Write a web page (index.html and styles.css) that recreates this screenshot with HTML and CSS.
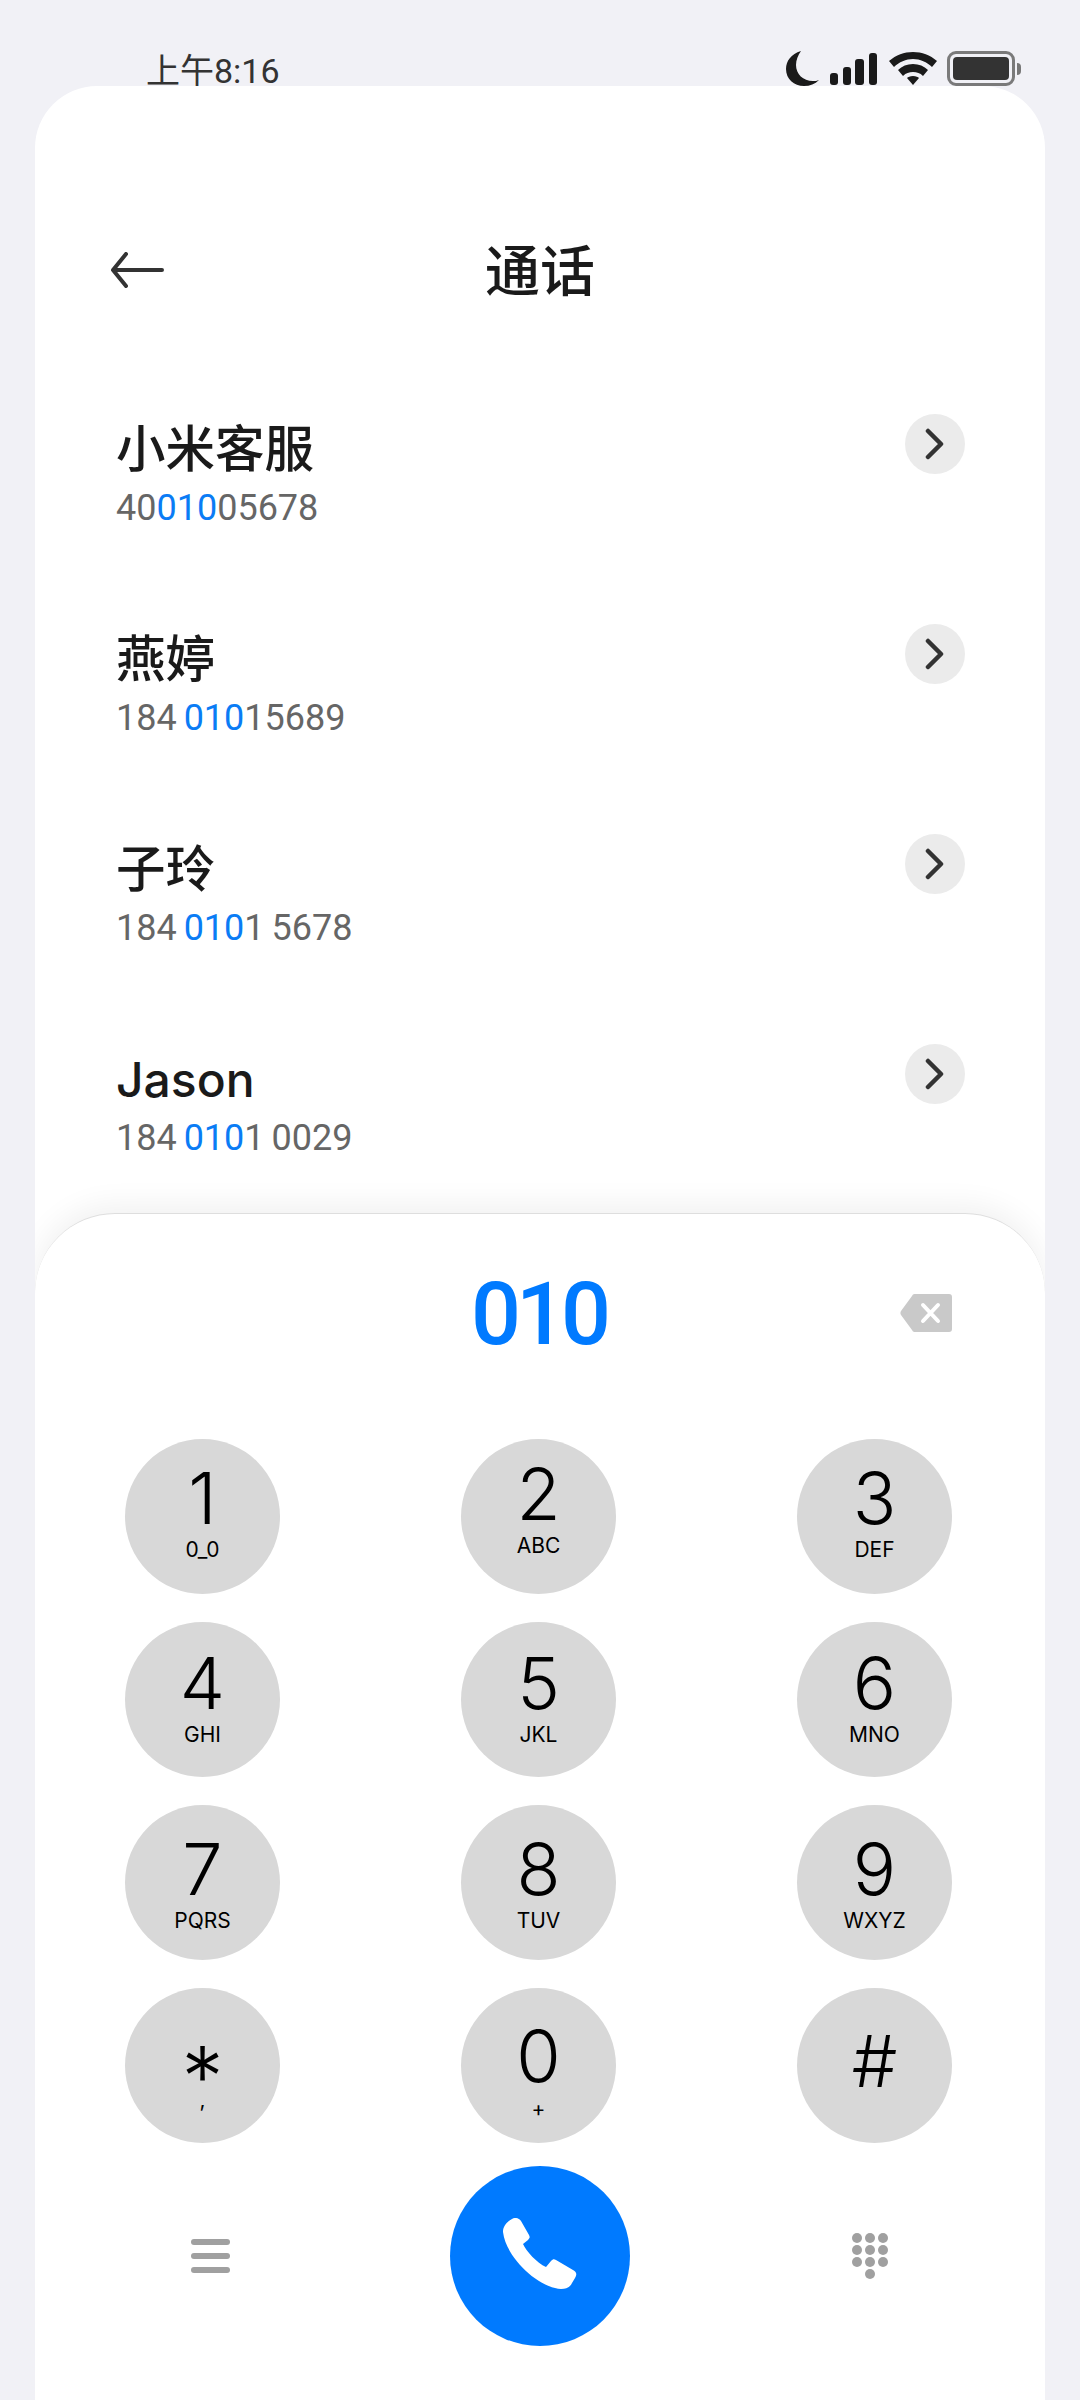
FILE: index.html
```html
<!DOCTYPE html>
<html>
<head>
  <meta charset="utf-8">
  <title>通话</title>
  <link rel="stylesheet" href="styles.css">
</head>
<body>
  <!-- Status bar, the card covers the bottom of it -->
  <div class="status-bar">
    <span class="status-time">上午8:16</span>
    <div class="status-icons">
      <svg class="icon-moon" width="33" height="35" viewBox="0 0 33 35"><path d="M15 0C5 3 0 10 0 18c0 10 8 17 18 17 6 0 11-2 15-6-2 1-4 1-6 1C17 30 10 23 10 14c0-5 2-10 5-14z" fill="#1a1a1a"/></svg>
      <svg class="icon-signal" width="47" height="32" viewBox="0 0 47 32"><g fill="#1a1a1a"><rect x="0" y="20" width="8" height="12" rx="3"/><rect x="13" y="14" width="8" height="18" rx="3"/><rect x="25" y="6" width="9" height="26" rx="3"/><rect x="39" y="0" width="8" height="32" rx="3"/></g></svg>
      <svg class="icon-wifi" width="48" height="33" viewBox="0 0 48 33"><path d="M24 0C15 0 7 3 0 9l5 6c5-5 12-8 19-8s14 3 19 8l5-6C41 3 33 0 24 0z" fill="#1a1a1a"/><path d="M24 12c-6 0-11 2-15 6l5 6c3-3 6-4 10-4s7 1 10 4l5-6c-4-4-9-6-15-6z" fill="#1a1a1a"/><path d="M24 24c-3 0-5 1-6 2l6 7 6-7c-1-1-3-2-6-2z" fill="#1a1a1a"/></svg>
      <div class="battery"><div class="battery-level"></div></div>
      <div class="battery-nub"></div>
    </div>
  </div>

  <div class="card">
    <div class="nav">
      <svg class="back" width="54" height="36" viewBox="0 0 54 36"><path d="M52 18H3M16 2L3 18l13 16" fill="none" stroke="#333" stroke-width="4" stroke-linecap="round" stroke-linejoin="round"/></svg>
      <h1 class="title">通话</h1>
    </div>

    <div class="list">
      <div class="row">
        <div class="row-text">
          <div class="name">小米客服</div>
          <div class="number">40<em>010</em>05678</div>
        </div>
        <div class="more"><svg width="20" height="32" viewBox="0 0 20 32"><path d="M3 3l13 13L3 29" fill="none" stroke="#333" stroke-width="4.5" stroke-linecap="round" stroke-linejoin="round"/></svg></div>
      </div>
      <div class="row">
        <div class="row-text">
          <div class="name">燕婷</div>
          <div class="number">184 <em>010</em>15689</div>
        </div>
        <div class="more"><svg width="20" height="32" viewBox="0 0 20 32"><path d="M3 3l13 13L3 29" fill="none" stroke="#333" stroke-width="4.5" stroke-linecap="round" stroke-linejoin="round"/></svg></div>
      </div>
      <div class="row">
        <div class="row-text">
          <div class="name">子玲</div>
          <div class="number">184 <em>010</em>1 5678</div>
        </div>
        <div class="more"><svg width="20" height="32" viewBox="0 0 20 32"><path d="M3 3l13 13L3 29" fill="none" stroke="#333" stroke-width="4.5" stroke-linecap="round" stroke-linejoin="round"/></svg></div>
      </div>
      <div class="row">
        <div class="row-text">
          <div class="name name-latin">Jason</div>
          <div class="number">184 <em>010</em>1 0029</div>
        </div>
        <div class="more"><svg width="20" height="32" viewBox="0 0 20 32"><path d="M3 3l13 13L3 29" fill="none" stroke="#333" stroke-width="4.5" stroke-linecap="round" stroke-linejoin="round"/></svg></div>
      </div>
    </div>

    <!-- Dialer sheet -->
    <div class="sheet">
      <div class="display">
        <div class="typed">010</div>
        <svg class="delete" width="52" height="38" viewBox="0 0 52 38"><path d="M15 0h34a3 3 0 0 1 3 3v32a3 3 0 0 1-3 3H15a3 3 0 0 1-3-2L1 21a4 4 0 0 1 0-4L12 2a3 3 0 0 1 3-2z" fill="#c9c9c9"/><path d="M23 11l15 16M38 11L23 27" stroke="#fff" stroke-width="4" stroke-linecap="round"/></svg>
      </div>

      <div class="keypad">
        <div class="key key-low"><span class="digit">1</span><span class="letters">0_0</span></div>
        <div class="key key-high"><span class="digit">2</span><span class="letters">ABC</span></div>
        <div class="key key-low"><span class="digit">3</span><span class="letters">DEF</span></div>
        <div class="key key-mid"><span class="digit">4</span><span class="letters">GHI</span></div>
        <div class="key key-mid"><span class="digit">5</span><span class="letters">JKL</span></div>
        <div class="key key-mid"><span class="digit">6</span><span class="letters">MNO</span></div>
        <div class="key key-down"><span class="digit">7</span><span class="letters">PQRS</span></div>
        <div class="key key-down"><span class="digit">8</span><span class="letters">TUV</span></div>
        <div class="key key-down"><span class="digit">9</span><span class="letters">WXYZ</span></div>
        <div class="key key-star"><span class="digit">*</span><span class="letters">,</span></div>
        <div class="key key-zero"><span class="digit">0</span><span class="letters">+</span></div>
        <div class="key key-hash"><span class="digit">#</span></div>
      </div>

      <div class="actions">
        <svg class="menu" width="39" height="34" viewBox="0 0 39 34"><g fill="#a0a0a0"><rect width="39" height="6" rx="3"/><rect y="14" width="39" height="6" rx="3"/><rect y="28" width="39" height="6" rx="3"/></g></svg>
        <div class="call">
          <svg width="74" height="76" viewBox="0 0 74 76"><path d="M9 1c3-2 7-1 9 2l8 14c1 2 1 3-1 5l-5 4c3 7 14 19 23 23l5-6c2-2 3-2 5-1l17 10c4 2 4 5 2 8l-3 5c-2 4-5 6-11 6C36 70 3 40 0 14 0 8 4 4 9 1z" fill="#fff"/></svg>
        </div>
        <svg class="dots" width="36" height="46" viewBox="0 0 36 46"><g fill="#a0a0a0"><circle cx="5" cy="5" r="5"/><circle cx="18" cy="5" r="5"/><circle cx="31" cy="5" r="5"/><circle cx="5" cy="17" r="5"/><circle cx="18" cy="17" r="5"/><circle cx="31" cy="17" r="5"/><circle cx="5" cy="29" r="5"/><circle cx="18" cy="29" r="5"/><circle cx="31" cy="29" r="5"/><circle cx="18" cy="41" r="5"/></g></svg>
      </div>
    </div>
  </div>
</body>
</html>
```

FILE: styles.css
```css
body {
  margin: 0;
  height: 2400px;
  overflow: hidden;
  background-color: #f1f1f6;
  display: flex;
  flex-direction: column;
  font-family: Roboto, "Noto Sans CJK SC", sans-serif;
}

/* Status bar */
.status-bar {
  height: 86px;
  flex-shrink: 0;
  display: flex;
  justify-content: space-between;
  padding: 52px 59px 0 146px;
  box-sizing: border-box;
}
.status-time {
  font-size: 34px;
  line-height: 38px;
  color: #333;
}
.status-icons {
  display: flex;
  align-items: flex-start;
  margin-top: -1px;
}
.icon-signal {
  margin: 2px 0 0 11px;
}
.icon-wifi {
  margin: 1px 0 0 12px;
}
.battery {
  margin-left: 10px;
  width: 68px;
  height: 35px;
  box-sizing: border-box;
  border: 3px solid #7a7a7a;
  border-radius: 9px;
  padding: 3px;
}
.battery-level {
  height: 100%;
  background-color: #333;
  border-radius: 4px;
}
.battery-nub {
  margin: 12px 0 0 2px;
  width: 4px;
  height: 12px;
  background-color: #777;
  border-radius: 0 4px 4px 0;
}

/* White card */
.card {
  flex: 1;
  margin: 0 35px;
  background-color: #fff;
  border-radius: 62px 62px 0 0;
  display: flex;
  flex-direction: column;
  overflow: hidden;
  position: relative;
}
.nav {
  height: 320px;
  flex-shrink: 0;
  box-sizing: border-box;
  padding-top: 150px;
  position: relative;
  display: flex;
  justify-content: center;
}
.back {
  position: absolute;
  left: 75px;
  top: 166px;
}
.title {
  margin: 0;
  font-size: 55px;
  line-height: 72px;
  font-weight: 500;
  color: #1a1a1a;
}

/* Contacts, the sheet covers whatever does not fit */
.list {
  flex: 1;
  min-height: 0;
  padding: 0 80px 0 81px;
}
.row {
  height: 210px;
  display: flex;
  justify-content: space-between;
  align-items: flex-start;
}
.name {
  font-size: 49.5px;
  line-height: 64px;
  font-weight: 500;
  color: #1a1a1a;
  padding-top: 12px;
}
.name-latin {
  font-family: Inter, sans-serif;
  font-size: 48px;
}
.number {
  font-size: 36px;
  line-height: 42px;
  word-spacing: -2px;
  color: #666;
  margin-top: 5px;
}
.number em {
  font-style: normal;
  color: #0a7cf5;
}
.more {
  width: 60px;
  height: 60px;
  margin-top: 8px;
  border-radius: 50%;
  background-color: #ebebeb;
  display: flex;
  align-items: center;
  justify-content: center;
}

/* Dialer */
.sheet {
  height: 1187px;
  flex-shrink: 0;
  box-sizing: border-box;
  background-color: #fff;
  border-top: 1px solid #dedede;
  border-radius: 80px 80px 0 0;
  box-shadow: 0 -8px 30px rgba(0, 0, 0, 0.06);
  position: relative;
}
.display {
  height: 225px;
  position: relative;
  display: flex;
  justify-content: center;
}
.typed {
  font-size: 88px;
  line-height: 100px;
  font-weight: 500;
  letter-spacing: -5px;
  color: #007aff;
  margin-left: -3px;
  margin-top: 50px;
}
.delete {
  position: absolute;
  left: 865px;
  top: 80px;
}
.keypad {
  display: grid;
  grid-template-columns: repeat(3, 155px);
  grid-auto-rows: 155px;
  column-gap: 181px;
  row-gap: 28px;
  padding-left: 90px;
}
.key {
  border-radius: 50%;
  box-sizing: border-box;
  background-color: #d8d8d8;
  color: #000;
  font-family: Inter, sans-serif;
  display: flex;
  flex-direction: column;
  align-items: center;
}
.digit {
  font-size: 72px;
  line-height: 72px;
  font-weight: 300;
}
.letters {
  font-size: 21px;
  line-height: 26px;
  margin-top: 3px;
}
.key-high { padding-top: 19px; }
.key-low { padding-top: 23px; }
.key-mid { padding-top: 25px; }
.key-down { padding-top: 28px; }
.key-star { padding-top: 75px; }
.key-star .digit {
  font-size: 84px;
  line-height: 28px;
}
.key-star .letters { margin-top: -4px; }
.key-zero { padding-top: 32px; }
.key-zero .letters { margin-top: 4px; }
.key-hash { padding-top: 37px; }
.actions {
  display: flex;
  align-items: center;
  padding-top: 23px;
  height: 180px;
}
.menu {
  margin-left: 156px;
}
.call {
  margin-left: 220px;
  width: 180px;
  height: 180px;
  border-radius: 50%;
  background-color: #007aff;
  display: flex;
  align-items: center;
  justify-content: center;
}
.dots {
  margin-left: 222px;
}
```
